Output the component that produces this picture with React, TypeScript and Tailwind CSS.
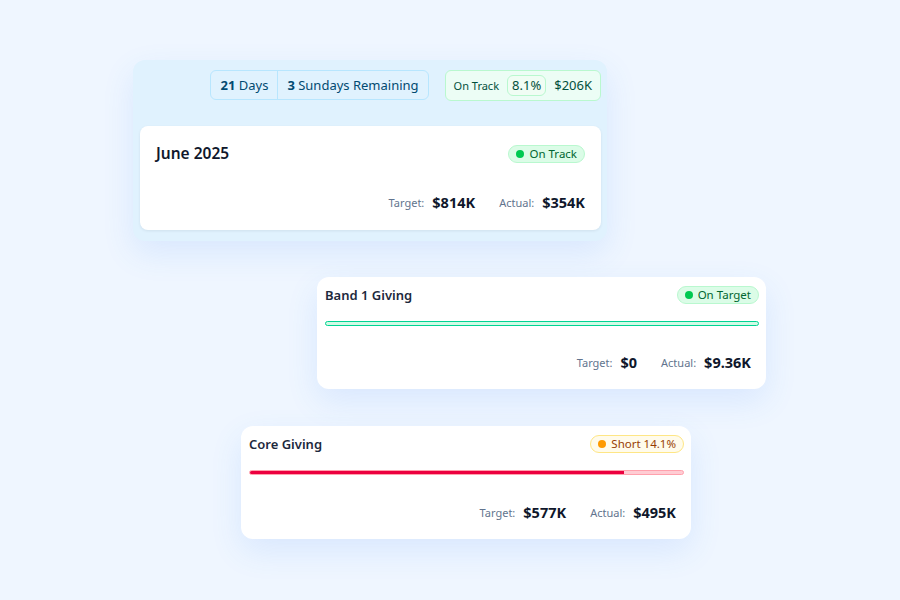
import React from "react";

function Badge({ tone, label }: { tone: "green" | "amber"; label: string }) {
  if (tone === "green") {
    return (
      <span className="flex h-[18px] items-center gap-[5px] rounded-full border border-green-200 bg-green-100 px-[7px] text-[11.5px] leading-none text-green-800">
        <span className="h-[8px] w-[8px] rounded-full bg-green-500" />
        {label}
      </span>
    );
  }
  return (
    <span className="flex h-[18px] items-center gap-[5px] rounded-full border border-amber-200 bg-amber-50 px-[7px] text-[11.5px] leading-none text-amber-800">
      <span className="h-[8px] w-[8px] rounded-full bg-amber-500" />
      {label}
    </span>
  );
}

function Stats({ target, actual }: { target: string; actual: string }) {
  return (
    <div className="flex h-[20px] items-center justify-end gap-[24px] leading-none">
      <div className="flex items-center gap-[8px]">
        <span className="text-[11px] text-slate-500">Target:</span>
        <span className="text-[14.5px] font-bold text-slate-900">{target}</span>
      </div>
      <div className="flex items-center gap-[8px]">
        <span className="text-[11px] text-slate-500">Actual:</span>
        <span className="text-[14.5px] font-bold text-slate-900">{actual}</span>
      </div>
    </div>
  );
}

export default function App() {
  return (
    <div
      className="flex h-[600px] w-[900px] flex-col bg-[#eff6ff]"
      style={{ fontFamily: '"Noto Sans", "Open Sans", sans-serif' }}
    >
      <div className="ml-[133px] mt-[60px] flex h-[181px] w-[474px] flex-col rounded-xl bg-[#e0f2fe] pl-[7px] pr-[6px] pt-[10px] shadow-[0_12px_32px_rgba(59,130,246,0.12)]">
        <div className="flex justify-end gap-[16px] leading-none">
          <div className="flex h-[30px] items-center rounded-md border border-sky-200 text-[13px] text-sky-900">
            <div className="flex h-full items-center px-[9px]">
              <span className="font-bold">21</span>&nbsp;Days
            </div>
            <div className="flex h-full items-center border-l border-sky-200 px-[9px]">
              <span className="font-bold">3</span>&nbsp;Sundays Remaining
            </div>
          </div>
          <div className="flex h-[31px] items-center gap-[8px] rounded-md border border-green-200 bg-[#ecfdf5] px-[8px] text-[11px] text-emerald-900">
            <span>On Track</span>
            <span className="flex h-[21px] items-center rounded-md border border-green-200 bg-[#f0fdf4] px-[4px] text-[13px]">8.1%</span>
            <span className="text-[13px]">$206K</span>
          </div>
        </div>
        <div className="mt-[25px] flex h-[104px] flex-col justify-between rounded-lg bg-white px-[16px] pt-[19px] pb-[18px] shadow-[0_1px_3px_rgba(15,23,42,0.08)]">
          <div className="flex h-[18px] items-center justify-between">
            <span className="text-[15.5px] font-semibold leading-none text-slate-900">June 2025</span>
            <Badge tone="green" label="On Track" />
          </div>
          <Stats target="$814K" actual="$354K" />
        </div>
      </div>

      <div className="ml-[317px] mt-[36px] flex h-[112px] w-[449px] flex-col rounded-xl bg-white pl-[8px] pr-[7px] pt-[9px] shadow-[0_12px_32px_rgba(59,130,246,0.12)]">
        <div className="flex h-[18px] items-center justify-between">
          <span className="text-[13px] font-semibold leading-none text-slate-800">Band 1 Giving</span>
          <Badge tone="green" label="On Target" />
        </div>
        <div className="mt-[17px] h-[5px] w-full rounded-full border border-emerald-400 bg-emerald-100" />
        <div className="mt-[26px] pr-[8px]">
          <Stats target="$0" actual="$9.36K" />
        </div>
      </div>

      <div className="ml-[241px] mt-[37px] flex h-[113px] w-[450px] flex-col rounded-xl bg-white pl-[8px] pr-[7px] pt-[9px] shadow-[0_12px_32px_rgba(59,130,246,0.12)]">
        <div className="flex h-[18px] items-center justify-between">
          <span className="text-[13px] font-semibold leading-none text-slate-800">Core Giving</span>
          <Badge tone="amber" label="Short 14.1%" />
        </div>
        <div className="mt-[17px] flex h-[5px] w-full overflow-hidden rounded-full border border-rose-300 bg-rose-200">
          <div className="h-full bg-rose-600" style={{ width: "86.3%" }} />
        </div>
        <div className="mt-[27px] pr-[8px]">
          <Stats target="$577K" actual="$495K" />
        </div>
      </div>
    </div>
  );
}
